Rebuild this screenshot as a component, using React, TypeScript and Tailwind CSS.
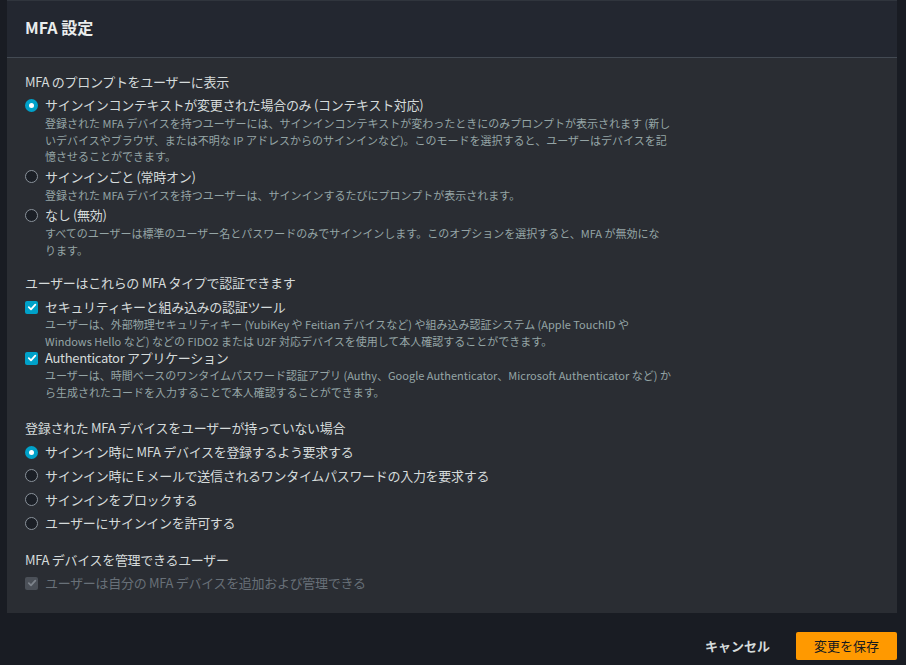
import React from 'react';

const font = { fontFamily: '"Noto Sans CJK JP", "Noto Sans", sans-serif' };

function Radio({ checked }: { checked?: boolean }) {
    if (checked) {
        return (
            <span className="flex h-[13px] w-[13px] shrink-0 items-center justify-center rounded-full bg-[#00a1c9]">
                <span className="h-[5px] w-[5px] rounded-full bg-white" />
            </span>
        );
    }
    return <span className="h-[13px] w-[13px] shrink-0 rounded-full border-[1.5px] border-[#8a929b] bg-[#1b1f26]" />;
}

function Check({ disabled }: { disabled?: boolean }) {
    return (
        <span
            className={
                'flex h-[13px] w-[13px] shrink-0 items-center justify-center rounded-[2px] ' +
                (disabled ? 'bg-[#4b5058]' : 'bg-[#00a1c9]')
            }
        >
            <svg width="10" height="10" viewBox="0 0 10 10">
                <path
                    d="M1.8 5.2 L4 7.3 L8.3 2.6"
                    fill="none"
                    stroke={disabled ? '#7d838b' : '#ffffff'}
                    strokeWidth="1.8"
                    strokeLinecap="round"
                    strokeLinejoin="round"
                />
            </svg>
        </span>
    );
}

function Option({
    control,
    label,
    lines,
    muted,
    compact,
}: {
    control: React.ReactNode;
    label: string;
    lines?: string[];
    muted?: boolean;
    compact?: boolean;
}) {
    return (
        <div>
            <div className={'flex items-center gap-[7px] ' + (compact ? 'h-[18px]' : 'h-[20px]')}>
                {control}
                <span className={'text-[13px] tracking-[-0.3px] ' + (muted ? 'text-[#687078]' : 'text-[#d5dbdb]')}>
                    {label}
                </span>
            </div>
            {lines && (
                <div className="pl-[20px] text-[11px] leading-[16.5px] text-[#95a5a6]">
                    {lines.map((l, i) => (
                        <div key={i} className="whitespace-nowrap">
                            {l}
                        </div>
                    ))}
                </div>
            )}
        </div>
    );
}

function Heading({ children, className }: { children: React.ReactNode; className?: string }) {
    return <div className={'text-[13px] leading-[20px] tracking-[-0.3px] text-[#d5dbdb] ' + (className ?? '')}>{children}</div>;
}

export default function App() {
    return (
        <div className="min-h-[665px] bg-[#191c23]" style={font}>
            <div className="ml-[7px] mr-[9px] border-t border-[#30353d] bg-[#2a2d33]">
                <div className="flex h-[57px] items-center border-b border-[#434a53] bg-[#232730] px-[18px] pb-[4px]">
                    <h2 className="text-[16px] font-bold text-[#eaeded]">MFA 設定</h2>
                </div>

                <div className="px-[18px] pb-[20px] pt-[14px]">
                    <Heading>MFA のプロンプトをユーザーに表示</Heading>
                    <div className="mt-[3px] flex flex-col gap-[2px]">
                        <Option
                            control={<Radio checked />}
                            label="サインインコンテキストが変更された場合のみ (コンテキスト対応)"
                            lines={[
                                '登録された MFA デバイスを持つユーザーには、サインインコンテキストが変わったときにのみプロンプトが表示されます (新し',
                                'いデバイスやブラウザ、または不明な IP アドレスからのサインインなど)。このモードを選択すると、ユーザーはデバイスを記',
                                '憶させることができます。',
                            ]}
                        />
                        <Option
                            control={<Radio />}
                            label="サインインごと (常時オン)"
                            lines={['登録された MFA デバイスを持つユーザーは、サインインするたびにプロンプトが表示されます。']}
                        />
                        <Option
                            control={<Radio />}
                            label="なし (無効)"
                            lines={[
                                'すべてのユーザーは標準のユーザー名とパスワードのみでサインインします。このオプションを選択すると、MFA が無効にな',
                                'ります。',
                            ]}
                        />
                    </div>

                    <Heading className="mt-[15px]">ユーザーはこれらの MFA タイプで認証できます</Heading>
                    <div className="mt-[5px] flex flex-col gap-0">
                        <Option
                            compact
                            control={<Check />}
                            label="セキュリティキーと組み込みの認証ツール"
                            lines={[
                                'ユーザーは、外部物理セキュリティキー (YubiKey や Feitian デバイスなど) や組み込み認証システム (Apple TouchID や',
                                'Windows Hello など) などの FIDO2 または U2F 対応デバイスを使用して本人確認することができます。',
                            ]}
                        />
                        <Option
                            compact
                            control={<Check />}
                            label="Authenticator アプリケーション"
                            lines={[
                                'ユーザーは、時間ベースのワンタイムパスワード認証アプリ (Authy、Google Authenticator、Microsoft Authenticator など) か',
                                'ら生成されたコードを入力することで本人確認することができます。',
                            ]}
                        />
                    </div>

                    <Heading className="mt-[18px]">登録された MFA デバイスをユーザーが持っていない場合</Heading>
                    <div className="mt-[4px] flex flex-col gap-[3.7px]">
                        <Option control={<Radio checked />} label="サインイン時に MFA デバイスを登録するよう要求する" />
                        <Option control={<Radio />} label="サインイン時に E メールで送信されるワンタイムパスワードの入力を要求する" />
                        <Option control={<Radio />} label="サインインをブロックする" />
                        <Option control={<Radio />} label="ユーザーにサインインを許可する" />
                    </div>

                    <Heading className="mt-[17px]">MFA デバイスを管理できるユーザー</Heading>
                    <div className="mt-[3px]">
                        <Option control={<Check disabled />} label="ユーザーは自分の MFA デバイスを追加および管理できる" muted />
                    </div>
                </div>
            </div>

            <div className="mr-[9px] flex h-[52px] items-end justify-end gap-[26px] pb-[5px]">
                <button className="flex h-[28px] items-center text-[13px] font-bold text-[#d5dbdb]">キャンセル</button>
                <button className="h-[28px] w-[101px] rounded-[2px] bg-[#ff9900] text-[13px] text-[#16191f]">変更を保存</button>
            </div>
        </div>
    );
}
